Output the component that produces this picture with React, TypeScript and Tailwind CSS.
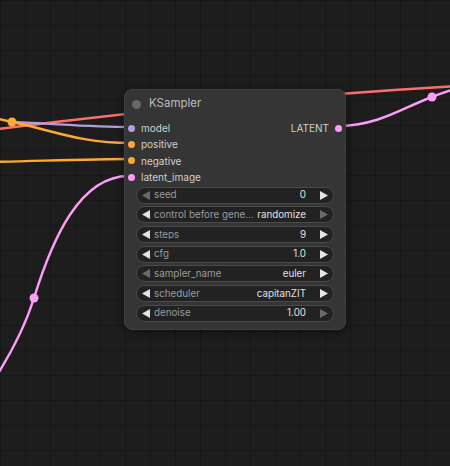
type Widget = {
  label: string;
  value: string;
  leftOff?: boolean;
  rightOff?: boolean;
};

const inputs = [
  { name: "model", color: "bg-[#b39ddb]" },
  { name: "positive", color: "bg-[#ffa931]" },
  { name: "negative", color: "bg-[#ffa931]" },
  { name: "latent_image", color: "bg-[#ff9cf9]" },
];

const widgets: Widget[] = [
  { label: "seed", value: "0", leftOff: true },
  { label: "control before gene...", value: "randomize", rightOff: true },
  { label: "steps", value: "9" },
  { label: "cfg", value: "1.0" },
  { label: "sampler_name", value: "euler", leftOff: true },
  { label: "scheduler", value: "capitanZIT" },
  { label: "denoise", value: "1.00", rightOff: true },
];

const Arrow = ({ dir, off }: { dir: "left" | "right"; off?: boolean }) => (
  <svg width="8" height="9" viewBox="0 0 8 9" className="shrink-0">
    <path
      d={dir === "left" ? "M8 0 L0 4.5 L8 9 Z" : "M0 0 L8 4.5 L0 9 Z"}
      fill={off ? "#6a6a6a" : "#e4e4e4"}
    />
  </svg>
);

const Links = () => (
  <svg className="absolute inset-0" width="450" height="466" viewBox="0 0 450 466">
    <g fill="none" strokeWidth="2.4" strokeLinecap="round">
      {/* vae link passing behind node */}
      <path d="M-10 130 C 150 110, 300 95, 460 86" stroke="#ff6e6e" />
      {/* model */}
      <path d="M12 122 C 60 124, 90 127, 131 127" stroke="#b39ddb" />
      {/* positive */}
      <path d="M-10 117 L12 122 C 55 131, 80 143, 131 143" stroke="#ffa931" />
      {/* negative */}
      <path d="M-10 162 C 40 161, 90 159, 131 159" stroke="#ffa931" />
      {/* latent in */}
      <path d="M131 176 C 80 174, 52 240, 34 298 C 24 330, 10 355, -6 380" stroke="#ff9cf9" />
      {/* latent out */}
      <path d="M339 126 C 380 125, 402 108, 432 97 C 440 94, 448 90, 460 88" stroke="#ff9cf9" />
    </g>
    <circle cx="12" cy="122" r="4.5" fill="#ffa931" />
    <circle cx="34" cy="298" r="4.5" fill="#ff9cf9" />
    <circle cx="432" cy="97" r="4.5" fill="#ff9cf9" />
  </svg>
);

export default function App() {
  return (
    <div
      className="relative w-[450px] h-[466px] overflow-hidden bg-[#1d1d1d] bg-[image:linear-gradient(to_right,#171717_1px,transparent_1px),linear-gradient(to_bottom,#171717_1px,transparent_1px)] bg-[size:25px_25px]"
      style={{ fontFamily: "Inter, 'Noto Sans', sans-serif" }}
    >
      <Links />

      {/* node */}
      <div className="absolute left-[124px] top-[89px] w-[222px] h-[241px] rounded-[8px] bg-[#353535] border border-[#414141] shadow-[0_2px_8px_rgba(0,0,0,0.5)] flex flex-col">
        {/* title */}
        <div className="h-[28px] flex items-center pl-[7px] gap-[8px] shrink-0">
          <div className="w-[9px] h-[9px] rounded-full bg-[#686868]" />
          <span className="text-[11.5px] text-[#bdbdbd]">KSampler</span>
        </div>

        {/* slots */}
        <div className="relative flex flex-col pt-[2px]">
          {inputs.map((s) => (
            <div key={s.name} className="h-[16.3px] flex items-center pl-[3px] gap-[6px]">
              <div className={`w-[7px] h-[7px] rounded-full ${s.color}`} />
              <span className="text-[10px] text-[#d0d0d0] leading-none">{s.name}</span>
            </div>
          ))}
          <div className="absolute right-[3px] top-[2px] h-[16.3px] flex items-center gap-[6px]">
            <span className="text-[10px] text-[#d0d0d0] leading-none">LATENT</span>
            <div className="w-[7px] h-[7px] rounded-full bg-[#ff9cf9]" />
          </div>
        </div>

        {/* widgets */}
        <div className="flex flex-col gap-[2.67px] px-[11px] pt-[1.5px]">
          {widgets.map((w) => (
            <div
              key={w.label}
              className="h-[17px] rounded-full bg-[#222222] border border-[#4a4a4a] flex items-center pl-[5px] pr-[5px]"
            >
              <Arrow dir="left" off={w.leftOff} />
              <span className="ml-[4px] min-w-0 overflow-hidden text-[9.8px] text-[#9c9c9c] leading-none whitespace-nowrap">
                {w.label}
              </span>
              <span className="ml-auto pl-[4px] shrink-0 text-[9.8px] text-[#e0e0e0] leading-none pr-[14px]">
                {w.value}
              </span>
              <Arrow dir="right" off={w.rightOff} />
            </div>
          ))}
        </div>
      </div>
    </div>
  );
}
